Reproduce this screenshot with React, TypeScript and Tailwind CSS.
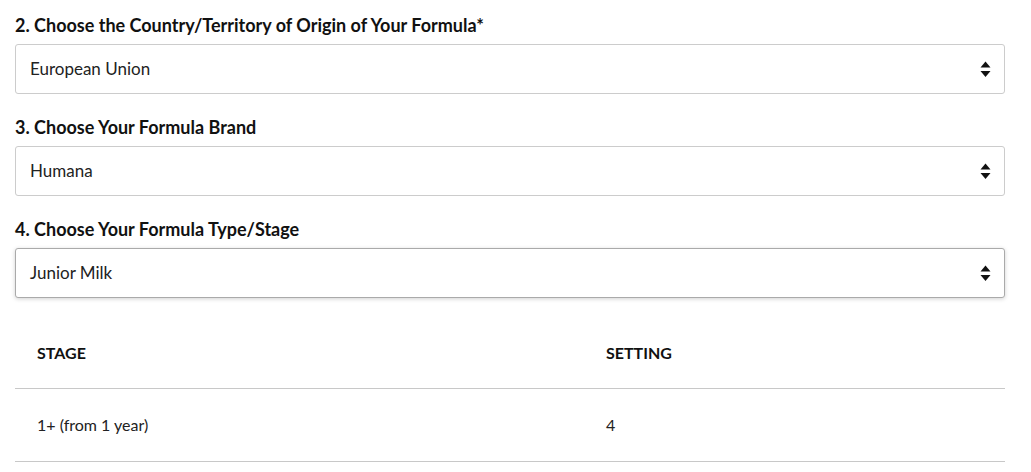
import React from 'react';

const font = { fontFamily: 'Lato, "Liberation Sans", sans-serif' };

function SortArrows() {
  return (
    <svg width="11" height="17" viewBox="0 0 11 17" className="shrink-0">
      <path d="M5.5 0.5 L10.5 6.5 L0.5 6.5 Z" fill="#111" />
      <path d="M0.5 10 L10.5 10 L5.5 16 Z" fill="#111" />
    </svg>
  );
}

interface FieldProps {
  label: string;
  value: string;
  focused?: boolean;
}

function SelectField({ label, value, focused }: FieldProps) {
  return (
    <div className="flex flex-col">
      <label className="text-[18px] font-bold leading-[24px] text-[#111]">{label}</label>
      <div
        className={`mt-[7px] flex h-[50px] items-center justify-between rounded-[3px] border bg-white pl-[14px] pr-[13px] text-[17px] text-[#222] ${
          focused
            ? 'border-[#aaaaaa] shadow-[0_1px_4px_rgba(0,0,0,0.18)]'
            : 'border-[#cccccc]'
        }`}
      >
        <span>{value}</span>
        <SortArrows />
      </div>
    </div>
  );
}

export default function App() {
  const rows = [{ stage: '1+ (from 1 year)', setting: '4' }];

  return (
    <div className="min-h-[472px] bg-white" style={font}>
      <div className="ml-[15px] w-[990px] pt-[13px]">
        <div className="flex flex-col gap-[21px]">
          <SelectField label="2. Choose the Country/Territory of Origin of Your Formula*" value="European Union" />
          <SelectField label="3. Choose Your Formula Brand" value="Humana" />
          <SelectField label="4. Choose Your Formula Type/Stage" value="Junior Milk" focused />
        </div>

        {/* Settings table */}
        <div className="mt-[20px]">
          <div className="grid h-[71px] grid-cols-[569px_1fr] items-center border-b border-[#c8c8c8] text-[16px] font-bold text-[#111]">
            <span className="pl-[22px]">STAGE</span>
            <span className="pl-[22px]">SETTING</span>
          </div>
          {rows.map((r) => (
            <div
              key={r.stage}
              className="grid h-[73px] grid-cols-[569px_1fr] items-center border-b border-[#c8c8c8] text-[16px] text-[#222]"
            >
              <span className="pl-[22px]">{r.stage}</span>
              <span className="pl-[22px]">{r.setting}</span>
            </div>
          ))}
        </div>
      </div>
    </div>
  );
}
